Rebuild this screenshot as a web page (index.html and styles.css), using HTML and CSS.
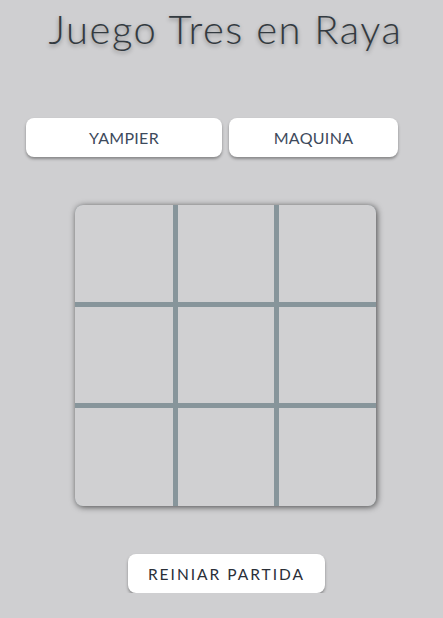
FILE: index.html
```html
<!DOCTYPE html>
<html lang="es">
<head>
    <meta charset="UTF-8">
    <meta name="viewport" content="width=device-width, initial-scale=1.0">
    <title>Juego Tres en Raya</title>
    <link rel="stylesheet" href="styles.css">
</head>
<body>
    <header>
        <h1>Juego Tres en Raya</h1>
    </header>
    <div class="players">
        <button class="player player-one">YAMPIER</button>
        <button class="player player-two">MAQUINA</button>
    </div>
    <main class="board">
        <div class="cell"></div>
        <div class="cell"></div>
        <div class="cell"></div>
        <div class="cell"></div>
        <div class="cell"></div>
        <div class="cell"></div>
        <div class="cell"></div>
        <div class="cell"></div>
        <div class="cell"></div>
    </main>
    <div class="actions">
        <button class="reset">REINIAR PARTIDA</button>
    </div>
</body>
</html>
```

FILE: styles.css
```css
body {
    font-family: Lato, "Open Sans", sans-serif;
    margin: 0;
    padding: 0;
    background-color: #cfcfd1;
    color: #333;
}
header {
    text-align: center;
    padding: 5px 0 0 8px;
}
h1 {
    margin: 0;
    font-size: 40px;
    font-weight: 300;
    line-height: 48px;
    letter-spacing: 1.5px;
    color: #333a40;
    text-shadow: 0 2px 4px rgba(0, 0, 0, 0.35);
}
.players {
    display: flex;
    gap: 7px;
    padding: 65px 0 0 26px;
}
.player {
    height: 39px;
    border: none;
    border-radius: 8px;
    background-color: #fff;
    font-family: Lato, sans-serif;
    font-size: 16px;
    letter-spacing: 0.3px;
    color: #3d4a5c;
    box-shadow: 0 2px 3px rgba(0, 0, 0, 0.35);
}
.player-one {
    width: 196px;
}
.player-two {
    width: 169px;
}
.board {
    display: grid;
    grid-template-columns: 98px 96px 97px;
    grid-template-rows: 97px 96px 98px;
    gap: 5px;
    width: 301px;
    margin: 48px 0 0 75px;
    background-color: #87959b;
    border-radius: 8px;
    overflow: hidden;
    box-shadow: 1px 1px 6px rgba(0, 0, 0, 0.65);
}
.cell {
    background-color: #d0d0d2;
}
.actions {
    display: flex;
    justify-content: center;
    padding: 48px 0 0 10px;
}
.reset {
    width: 197px;
    height: 39px;
    border: none;
    border-radius: 8px;
    background-color: #fff;
    font-family: Lato, sans-serif;
    font-size: 15.5px;
    letter-spacing: 2px;
    color: #2a2f38;
    box-shadow: 0 2px 3px rgba(0, 0, 0, 0.35);
}
```
